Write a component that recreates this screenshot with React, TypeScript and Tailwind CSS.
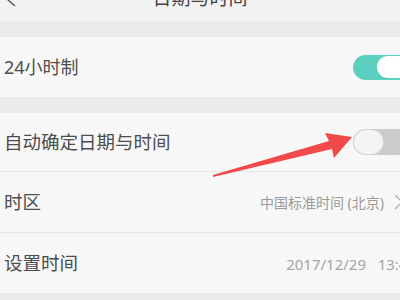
export default function App() {
  const font = { fontFamily: '"Noto Sans", "Noto Sans CJK SC", sans-serif' }
  return (
    <div className="relative w-[400px] h-[300px] overflow-hidden bg-[#ebebeb]" style={font}>
      <div className="relative h-[21px] bg-[#f2f2f2] flex justify-center items-end overflow-hidden">
        <svg className="absolute left-[4px] top-[-8px]" width="14" height="16" viewBox="0 0 14 16">
          <path d="M11 0 L3 7 L11 14" fill="none" stroke="#555" strokeWidth="1.4" />
        </svg>
        <div className="text-[19px] leading-[19px] mb-[13px] text-[#444]">日期与时间</div>
      </div>
      <div className="h-[16px]" />
      <div className="h-[60px] bg-[#f7f7f7] flex items-center justify-between pl-[4px] overflow-hidden">
        <span className="text-[18px] text-[#4d4d4d]">24小时制</span>
        <div className="w-[58px] h-[25px] rounded-full bg-[#5ccfbf] mr-[-11px] flex items-center justify-end pr-[2px]">
          <div className="w-[32px] h-[22px] rounded-full bg-white" />
        </div>
      </div>
      <div className="h-[16px]" />
      <div className="bg-[#f7f7f7]">
        <div className="h-[59px] flex items-center justify-between pl-[4px] border-b border-[#e6e6e6] overflow-hidden">
          <span className="text-[18.5px] text-[#4d4d4d]">自动确定日期与时间</span>
          <div className="w-[58px] h-[26px] rounded-full bg-[#cbcbcb] mr-[-11px] flex items-center">
            <div className="w-[31px] h-[26px] rounded-full bg-[#f4f4f4] border border-[#d6d6d6]" />
          </div>
        </div>
        <div className="h-[61px] flex items-center justify-between pl-[4px] border-b border-[#e6e6e6] overflow-hidden">
          <span className="text-[18.5px] text-[#4d4d4d]">时区</span>
          <div className="flex items-center gap-[10px] mr-[-6px]">
            <span className="text-[14px] text-[#9a9a9a]">中国标准时间 (北京)</span>
            <svg width="12" height="16" viewBox="0 0 12 16">
              <path d="M1 1 L8 8 L1 15" fill="none" stroke="#aaa" strokeWidth="1.2" />
            </svg>
          </div>
        </div>
        <div className="h-[60px] flex items-center justify-between pl-[4px] overflow-hidden">
          <span className="text-[18.5px] text-[#4d4d4d]">设置时间</span>
          <span className="text-[15px] text-[#a5a5a5] whitespace-nowrap mr-[-16px] mt-[2px]">2017/12/29&nbsp;&nbsp;&nbsp;13:46</span>
        </div>
      </div>
      <svg className="absolute left-0 top-0 pointer-events-none" width="400" height="300" viewBox="0 0 400 300">
        <polygon points="213,175 329,141 325,133 352,137 334,158 332,149 213,177" fill="#f24a4a" />
      </svg>
    </div>
  )
}
